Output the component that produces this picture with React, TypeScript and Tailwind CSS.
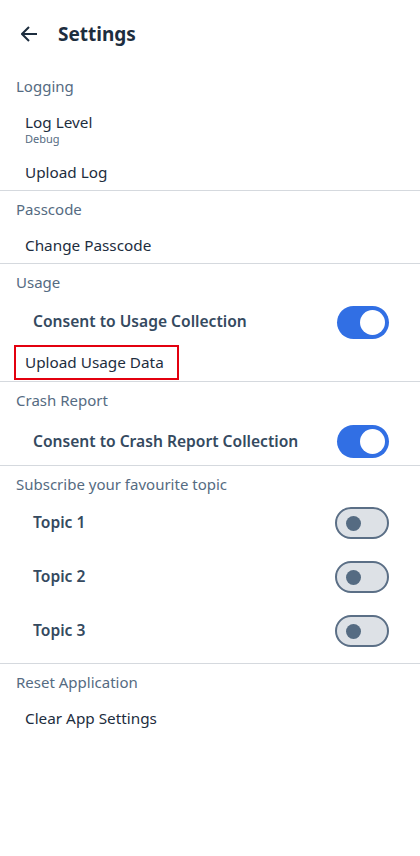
import React, { useState } from "react";

const SectionLabel: React.FC<{ text: string }> = ({ text }) => (
  <div className="h-[36px] flex items-center pl-4 text-[15px] text-[#556b82]">
    {text}
  </div>
);

const Item: React.FC<{ text: string; boxed?: boolean }> = ({ text, boxed }) => (
  <div className="h-[36px] flex items-center pl-[14px]">
    <div
      className={
        boxed
          ? "h-[35px] w-[165px] flex items-center pl-[9px] border-2 border-[#e3000f]"
          : "pl-[11px]"
      }
    >
      <div className="text-[15.3px] text-[#1d2d3e]">{text}</div>
    </div>
  </div>
);

const Toggle: React.FC<{ on: boolean; onClick: () => void }> = ({
  on,
  onClick,
}) =>
  on ? (
    <button
      onClick={onClick}
      className="w-[52px] h-[33px] rounded-full bg-[#316fe4] flex items-center justify-end pr-[4px]"
    >
      <span className="w-[25px] h-[25px] rounded-full bg-white" />
    </button>
  ) : (
    <button
      onClick={onClick}
      className="w-[54px] h-[32px] rounded-full bg-[#dde1e6] border-2 border-[#5b6f86] flex items-center pl-[9px]"
    >
      <span className="w-[15px] h-[15px] rounded-full bg-[#556b82]" />
    </button>
  );

const ToggleRow: React.FC<{
  text: string;
  on: boolean;
  onClick: () => void;
  h: string;
}> = ({ text, on, onClick, h }) => (
  <div className={`${h} flex items-center justify-between pl-[33px] pr-[31px]`}>
    <span className="text-[15.6px] font-semibold text-[#354a5f]">{text}</span>
    <Toggle on={on} onClick={onClick} />
  </div>
);

const Divider = () => <div className="h-px bg-[#d5d9de]" />;

export default function App() {
  const [usage, setUsage] = useState(true);
  const [crash, setCrash] = useState(true);
  const [topics, setTopics] = useState([false, false, false]);

  const flip = (i: number) =>
    setTopics((t) => t.map((v, j) => (j === i ? !v : v)));

  return (
    <div
      className="w-[420px] h-[856px] bg-white"
      style={{ fontFamily: '"Noto Sans", "Open Sans", sans-serif' }}
    >
      <div className="h-[68px] flex items-center pl-[21px] gap-[21px]">
        <svg width="16" height="16" viewBox="0 0 16 16" fill="none">
          <path
            d="M8 1 L1 8 L8 15 M1 8 H16"
            stroke="#1d2d3e"
            strokeWidth="2"
          />
        </svg>
        <span className="text-[19px] font-bold text-[#1d2d3e]">Settings</span>
      </div>

      <SectionLabel text="Logging" />
      <div className="h-[51px] pt-[9px] pl-[25px]">
        <div className="text-[15.3px] leading-[18px] text-[#1d2d3e]">
          Log Level
        </div>
        <div className="mt-[1px] text-[11px] leading-[14px] text-[#556b82]">
          Debug
        </div>
      </div>
      <div className="h-[35px] flex items-center pl-[25px] text-[15.3px] text-[#1d2d3e]">
        Upload Log
      </div>
      <Divider />

      <SectionLabel text="Passcode" />
      <Item text="Change Passcode" />
      <Divider />

      <SectionLabel text="Usage" />
      <ToggleRow
        text="Consent to Usage Collection"
        on={usage}
        onClick={() => setUsage(!usage)}
        h="h-[44px]"
      />
      <div className="h-[37px] flex items-center">
        <Item text="Upload Usage Data" boxed />
      </div>
      <Divider />

      <SectionLabel text="Crash Report" />
      <ToggleRow
        text="Consent to Crash Report Collection"
        on={crash}
        onClick={() => setCrash(!crash)}
        h="h-[47px]"
      />
      <Divider />

      <SectionLabel text="Subscribe your favourite topic" />
      <div className="flex flex-col gap-3 pb-[11px]">
        {topics.map((v, i) => (
          <ToggleRow
            key={i}
            text={`Topic ${i + 1}`}
            on={v}
            onClick={() => flip(i)}
            h="h-[42px]"
          />
        ))}
      </div>
      <Divider />

      <SectionLabel text="Reset Application" />
      <Item text="Clear App Settings" />
    </div>
  );
}
